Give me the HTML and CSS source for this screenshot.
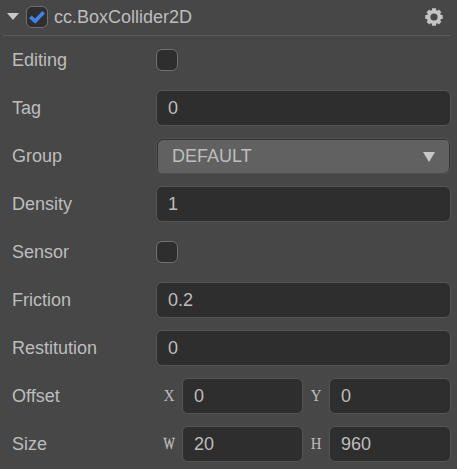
FILE: index.html
```html
<!DOCTYPE html>
<html lang="en">
<head>
<meta charset="utf-8">
<title>Inspector</title>
<link rel="stylesheet" href="styles.css">
</head>
<body>
<section class="component">
  <header class="header">
    <svg class="fold" width="12" height="7" viewBox="0 0 12 7"><path d="M0 0H12L6 7Z"/></svg>
    <span class="checkbox"><svg width="20" height="20" viewBox="0 0 20 20"><path class="tick" d="M3.3 9.8L8.2 14.2L16.6 5.2"/></svg></span>
    <span class="title">cc.BoxCollider2D</span>
    <svg class="gear" width="18" height="18" viewBox="-9 -9 18 18">
      <path class="teeth" d="M0-8.7V8.7M-8.7 0H8.7M-6.1-6.1L6.1 6.1M-6.1 6.1L6.1-6.1"/>
      <circle class="ring" r="5.4"/><circle class="hole" r="3.6"/>
    </svg>
  </header>
  <div class="row"><span class="label">Editing</span><span class="checkbox"></span></div>
  <div class="row"><span class="label">Tag</span><div class="input">0</div></div>
  <div class="row"><span class="label">Group</span><div class="select"><span>DEFAULT</span><svg width="12" height="10" viewBox="0 0 12 10"><path d="M0 0H12L6 10Z"/></svg></div></div>
  <div class="row"><span class="label">Density</span><div class="input">1</div></div>
  <div class="row"><span class="label">Sensor</span><span class="checkbox"></span></div>
  <div class="row"><span class="label">Friction</span><div class="input">0.2</div></div>
  <div class="row"><span class="label">Restitution</span><div class="input">0</div></div>
  <div class="row"><span class="label">Offset</span><div class="pair"><span class="axis">X</span><div class="input">0</div><span class="axis">Y</span><div class="input">0</div></div></div>
  <div class="row"><span class="label">Size</span><div class="pair"><span class="axis wide">W</span><div class="input">20</div><span class="axis">H</span><div class="input">960</div></div></div>
</section>
</body>
</html>
```
FILE: styles.css
```css
* { box-sizing: border-box; }
body {
  margin: 0;
  background: #474747;
  color: #bdbdbd;
  font: 18px/20px "Liberation Sans", Arial, sans-serif;
  overflow: hidden;
}
.component { width: 457px; height: 469px; padding: 0 6px 0 3px; }
.header {
  display: flex;
  align-items: center;
  height: 36px;
  padding: 0 8px 2px 4px;
  border-bottom: 1px solid #5a5a5a;
}
.fold { fill: #c8c8c8; margin-right: 7px; }
.title { margin-left: 6px; flex: 1; }
.teeth { stroke: #c4c4c4; stroke-width: 4; }
.ring { fill: none; stroke: #c4c4c4; stroke-width: 3.6; }
.hole { fill: #474747; }
.checkbox {
  display: block;
  width: 22px;
  height: 22px;
  flex: none;
  border: 1px solid #707070;
  border-radius: 6px;
  background: #2e2e2e;
}
.checkbox svg { display: block; }
.tick { fill: none; stroke: #4281e8; stroke-width: 3.8; }
.row {
  display: grid;
  grid-template-columns: 144px 1fr;
  align-items: center;
  height: 48px;
  padding-left: 9px;
}
.input {
  height: 36px;
  padding: 7px 11px;
  border: 1px solid #555;
  border-radius: 6px;
  background: #2e2e2e;
}
.select {
  display: flex;
  align-items: center;
  justify-content: space-between;
  height: 36px;
  padding: 0 15px;
  border: 1px solid #505050;
  border-radius: 6px;
  background: #616161;
  box-shadow: inset 1px 1px #333, inset -1px 0 #333;
}
.select svg { fill: #c8c8c8; margin-top: 1px; }
.pair {
  display: grid;
  grid-template-columns: 26px 121px 26px 122px;
  align-items: center;
}
.axis {
  font: 17px/20px "Liberation Serif", "Times New Roman", serif;
  text-align: center;
  transform: scaleX(0.87);
}
.wide { transform: scaleX(0.7); -webkit-text-stroke: 0.4px #bdbdbd; }
```
